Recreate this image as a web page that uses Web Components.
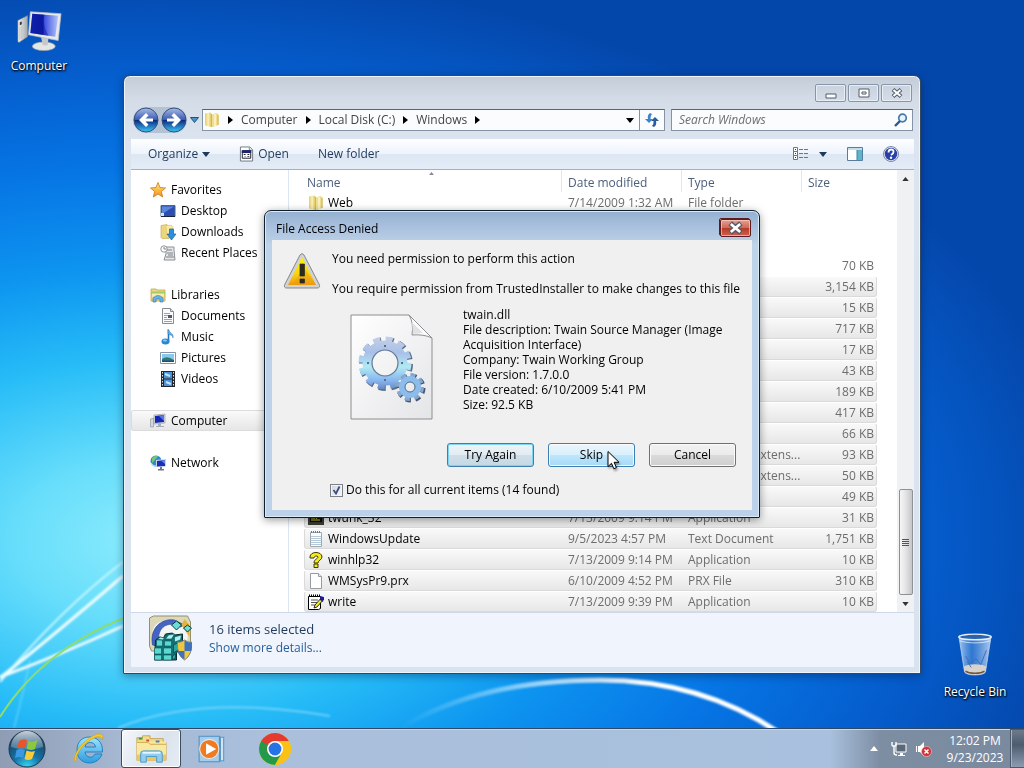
<!DOCTYPE html>
<html lang="en">
<head>
<meta charset="utf-8">
<meta name="viewport" content="width=device-width, initial-scale=1">
<title>Desktop</title>
<style>
  html, body {
    margin: 0;
    height: 100%;
    overflow: hidden;
  }
  body {
    font: 12px/16px "Open Sans", "Noto Sans", sans-serif;
    color: #000;
  }
  /* Everything that floats on the desktop's free canvas. */
  desktop-icon, explorer-window, access-dialog, mouse-pointer {
    position: absolute;
  }
  #computer { left: 2px; top: 8px; }
  #recycle { right: 12px; top: 632px; }
  explorer-window { left: 123px; right: 103px; top: 75px; }
  access-dialog { left: 264px; top: 210px; }
  mouse-pointer { left: 607px; top: 450px; }
</style>
</head>
<body>
<win-desktop>
  <desktop-icon id="computer" icon="computer-big">Computer</desktop-icon>
  <desktop-icon id="recycle" icon="bin">Recycle Bin</desktop-icon>

  <explorer-window>
    <address-bar slot="address">
      <address-crumb>Computer</address-crumb>
      <address-crumb>Local Disk (C:)</address-crumb>
      <address-crumb>Windows</address-crumb>
    </address-bar>
    <search-box slot="search" placeholder="Search Windows"></search-box>

    <tool-button slot="tools" menu>Organize</tool-button>
    <tool-button slot="tools" icon="exe">Open</tool-button>
    <tool-button slot="tools">New folder</tool-button>

    <nav-group slot="nav">
      <nav-item icon="star">Favorites</nav-item>
      <nav-item icon="desktop" child>Desktop</nav-item>
      <nav-item icon="downloads" child>Downloads</nav-item>
      <nav-item icon="recent" child>Recent Places</nav-item>
    </nav-group>
    <nav-group slot="nav">
      <nav-item icon="libraries">Libraries</nav-item>
      <nav-item icon="documents" child>Documents</nav-item>
      <nav-item icon="music" child>Music</nav-item>
      <nav-item icon="pictures" child>Pictures</nav-item>
      <nav-item icon="videos" child>Videos</nav-item>
    </nav-group>
    <nav-group slot="nav">
      <nav-item icon="computer" selected>Computer</nav-item>
    </nav-group>
    <nav-group slot="nav">
      <nav-item icon="network">Network</nav-item>
    </nav-group>

    <file-list slot="files"></file-list>

    <span slot="summary">16 items selected</span>
    <a slot="more" href="#details">Show more details...</a>
  </explorer-window>

  <access-dialog heading="File Access Denied">
    <p slot="message">You need permission to perform this action</p>
    <p slot="message">You require permission from TrustedInstaller to make changes to this file</p>
    <div slot="details">twain.dll</div>
    <div slot="details">File description: Twain Source Manager (Image Acquisition Interface)</div>
    <div slot="details">Company: Twain Working Group</div>
    <div slot="details">File version: 1.7.0.0</div>
    <div slot="details">Date created: 6/10/2009 5:41 PM</div>
    <div slot="details">Size: 92.5 KB</div>
    <push-button slot="actions" kind="default">Try Again</push-button>
    <push-button slot="actions" kind="hot">Skip</push-button>
    <push-button slot="actions">Cancel</push-button>
    <check-option slot="option">Do this for all current items (14 found)</check-option>
  </access-dialog>

  <task-bar slot="taskbar">
    <task-button icon="ie" label="Internet Explorer"></task-button>
    <task-button icon="explorer" label="Windows Explorer" active></task-button>
    <task-button icon="player" label="Media Player"></task-button>
    <task-button icon="chrome" label="Chrome"></task-button>
    <time slot="clock">12:02 PM</time>
    <time slot="clock">9/23/2023</time>
  </task-bar>

  <mouse-pointer></mouse-pointer>
</win-desktop>

<script>
(function() {
  /**
   * Icon drawings, as [viewBox, markup]. Gradient ids are local to the
   * shadow root that the icon is drawn in.
   */
  const ICONS = {
    'computer-big': ['0 0 48 44', `
      <defs>
        <linearGradient id="s" x1="0" x2="1"><stop offset="0" stop-color="#1428c0"/><stop offset=".45" stop-color="#0a1ab0"/><stop offset=".5" stop-color="#3c50e0"/><stop offset="1" stop-color="#b4c4fa"/></linearGradient>
        <linearGradient id="t" x1="0" x2="1"><stop offset="0" stop-color="#f2f2ee"/><stop offset="1" stop-color="#a4a8ac"/></linearGradient>
      </defs>
      <path d="M2 12l10-5v22L3 35l-1-1z" fill="url(#t)" stroke="#8c9298" stroke-width=".6"/>
      <path d="M4 14l2-1v3l-2 1z" fill="#333"/><path d="M4 19v13M6 18v13" stroke="#b8bcc0" stroke-width=".7"/>
      <ellipse cx="29" cy="39" rx="12" ry="4.500" fill="#e4e6e4" stroke="#a0a4a4" stroke-width=".7"/>
      <path d="M26 29h8l-1 9h-5z" fill="#c4c8cc"/>
      <path d="M15 3l32 2-3 28-31-6z" fill="#e6e8ea" stroke="#b8bec6" stroke-width=".8"/>
      <path d="M17 5l27 2-3 22-26-4z" fill="url(#s)"/>
      <path d="M17 5l13 1c-2 8 0 15 4 22l-19-3z" fill="#0c1690" opacity=".45"/>`],
    bin: ['0 0 40 46', `
      <defs><linearGradient id="g" x1="0" x2="1"><stop offset="0" stop-color="#cfe4fa" stop-opacity=".8"/><stop offset=".4" stop-color="#5a9ae4" stop-opacity=".5"/><stop offset="1" stop-color="#dceafa" stop-opacity=".8"/></linearGradient></defs>
      <path d="M3 3l6 38c2 4 20 4 22 0l6-38z" fill="url(#g)" stroke="#bcd4f0" stroke-width=".8"/>
      <path d="M8 35c6-3 18-3 24 0l-1 6c-3 4-19 4-22 0z" fill="#d8d2cc"/>
      <path d="M10 24l5 8 6-5 5 6 6-15M12 30l4 6" fill="none" stroke="#3f6cae" stroke-width="1"/>
      <path d="M10 40c4 3 16 3 20 0" fill="none" stroke="#72563e" stroke-width="1.500"/>
      <ellipse cx="20" cy="4" rx="17" ry="3" fill="#2a63ae" stroke="#e6eef6" stroke-width="1.500"/>
      <path d="M4 8c8 3 24 3 32 0" fill="none" stroke="#fff" opacity=".7"/>`],
    folder: ['0 0 16 16', `
      <defs><linearGradient id="f" x1="0" x2="1"><stop offset="0" stop-color="#e4cc6c"/><stop offset=".5" stop-color="#faf0b4"/><stop offset="1" stop-color="#dcbe54"/></linearGradient></defs>
      <path d="M1 1.500l5-1 1.500 1V15l-5.500-1-1-1z" fill="url(#f)"/>
      <path d="M7 3l5-2 2.500 1v11L9 15l-2-1z" fill="#f0de90"/>
      <path d="M7.500 2v13" stroke="#c4a848" stroke-width=".7"/><path d="M11 2v12" stroke="#fcf6d0" stroke-width="1.500"/><path d="M14 3v10" stroke="#c4a030" stroke-width=".8"/>`],
    star: ['0 0 16 16', `
      <defs><linearGradient id="y" x1="0" x2="0" y1="0" y2="1"><stop offset="0" stop-color="#fff07a"/><stop offset="1" stop-color="#f08c1c"/></linearGradient></defs>
      <path d="M8 .5l2 5 5.500.5-4.200 3.500 1.400 5.500L8 12l-4.700 3 1.400-5.500L.5 6l5.500-.5z" fill="url(#y)" stroke="#d67f26" stroke-width=".9"/>`],
    desktop: ['0 0 16 16', `
      <path d="M1 2.500h14v11H1z" fill="#2a4fb0" stroke="#4c6488"/><path d="M2 3.500h12L2 11z" fill="#5a86dc"/>
      <path d="M1 13h14v1H1z" fill="#18243c"/><path d="M1 10h3v3H1z" fill="#cfe6fa"/>`],
    downloads: ['0 0 16 16', `
      <path d="M1 1.500l6-1 2 2v12H2l-1-1z" fill="#ecd67c" stroke="#c4a648" stroke-width=".6"/><path d="M6 1.500h6l1 1v11H7z" fill="#f6e9a4" stroke="#d8be68" stroke-width=".5"/>
      <path d="M9.500 5h4v5H16l-4.500 6L7 10h2.500z" fill="#2f8edc" stroke="#1a62a8" stroke-width=".7"/>`],
    recent: ['0 0 16 16', `
      <path d="M6 2h8v3l1 10H4l2-6z" fill="#e6e8ea" stroke="#8c9094"/><circle cx="4" cy="4" r="3.200" fill="#fff" stroke="#90969c"/>
      <path d="M4 2v2h2M7 5h5M7 8h6M8 10h5M6 12h8" fill="none" stroke="#7c8288"/>`],
    libraries: ['0 0 16 16', `
      <path d="M1 2h5l1 1h8v11H1z" fill="#eed884" stroke="#c4a448" stroke-width=".8"/><path d="M1 4.500h14v3H1z" fill="#9cd060"/><path d="M2 6.500h12v3H2z" fill="#f6ecb4"/>
      <path d="M3 15v-4q5-5 10 0v4h-3v-3H6v3z" fill="#68b4e4" stroke="#3f7ebc" stroke-width=".7"/>`],
    documents: ['0 0 16 16', `
      <path d="M2.500.5h8l3 3v12h-11z" fill="#fbfbfb" stroke="#868c94"/><path d="M10.500.5v3h3" fill="#dcdfe2" stroke="#868c94"/>
      <path d="M4 5.500h6M4 7.500h4M4 9.500h3M4 11.500h8M4 13.500h8" stroke="#9aa2ac"/><path d="M8 7h4v3H8z" fill="#4b5a70"/>`],
    music: ['0 0 16 16', `
      <path d="M8.500 1v11.500" stroke="#2872bc" stroke-width="1.600"/><path d="M8 0c1 4 6 4 5 9 0-3-3-3-5-4z" fill="#5eb0ec" stroke="#2c78b8" stroke-width=".5"/>
      <ellipse cx="5.500" cy="12.500" rx="4" ry="2.900" fill="#2b86d2"/><ellipse cx="5" cy="11.500" rx="2" ry="1.100" fill="#8accf4"/>`],
    pictures: ['0 0 16 16', `
      <path d="M.5 2.500h15v11H.5z" fill="#fff" stroke="#8494a6"/><path d="M2 4h12v8H2z" fill="#8cc8ee"/><path d="M2 9q5-4 12 1v2H2z" fill="#2f7a70"/><path d="M2 10.500h12V12H2z" fill="#1e4c84"/>`],
    videos: ['0 0 16 16', `
      <path d="M1 0h14v16H1z" fill="#22262c"/><path d="M4 1h8v6.500H4zM4 8.500h8V15H4z" fill="#4a92d6"/><path d="M5 3l5 2M6 11l5 2" stroke="#c8e2f8" stroke-width="2"/>
      <path d="M2.500 1v14M13.500 1v14" stroke="#dfe4ea" stroke-dasharray="1.500 1.500"/>`],
    computer: ['0 0 16 16', `
      <path d="M.5 6l3-1v9h-3z" fill="#d4d8dc" stroke="#878e96" stroke-width=".6"/><path d="M4 2l11-1v9L4 11z" fill="#d8dce2" stroke="#8a93a0" stroke-width=".6"/>
      <path d="M5 3l9-1v7l-9 1z" fill="#1428b4"/><path d="M9 3l5-1v6z" fill="#5a74e4"/><path d="M8 11h3v2h3v1H6v-1h2z" fill="#a8aeb8"/>`],
    network: ['0 0 16 16', `
      <circle cx="6" cy="6" r="5.500" fill="#2d8cd0"/><path d="M2 3q3-3 6-2l-3 4-3 3z" fill="#74c870"/><path d="M1 8q3 4 6 3" stroke="#b8e4fa" fill="none"/>
      <path d="M6 5l10-1v7.500L6 12z" fill="#ccd4e0"/><path d="M7 6l8-1v6l-8 .5z" fill="#1830b8"/><path d="M11 5.500l4-.5v4z" fill="#6684ec"/><path d="M10 12h2v2h2v1.500H8V14h2z" fill="#68788e"/>`],
    exe: ['0 0 16 16', `
      <path d="M1.500.5h10l3 3v12h-13z" fill="#fff" stroke="#6c747c"/><path d="M11 1v3h3" fill="none" stroke="#5c9c3c"/>
      <path d="M3.500 4.500h9v8h-9z" fill="#fff" stroke="#141828"/><path d="M3 4h10v3H3z" fill="#1c2470"/><path d="M5 8h2v1H5zM9 8h2v1H9zM6 10h1v1H6zM9 10h2v1H9z" fill="#222"/>`],
    dosapp: ['0 0 16 16', `
      <path d="M0 1h16v14H0z" fill="#383c34"/><path d="M2 3h12v9H2z" fill="#0c0c08"/><path d="M3 5h3v1H3zM8 5l3 3M11 5L8 9M3 8h4M3 10h9" stroke="#dccc34" fill="none"/>`],
    text: ['0 0 16 16', `
      <path d="M2.500 1.500h11v14h-11z" fill="#fdfdfd" stroke="#a0a8b0"/><path d="M3 5.500h10M3 7.500h10M3 9.500h10M3 11.500h10M3 13.500h10" stroke="#b4cad8"/><path d="M3 1h10" stroke="#707a84" stroke-width="2" stroke-dasharray="1 1"/>`],
    help: ['0 0 16 16', `
      <path d="M2 5c0-6 12-6 12 0 0 3-4 3-4 6H6c0-4 4-4 4-6 0-1.500-4-1.500-4 1H2zM6 12h4v3.500H6z" fill="#f6ee1c" stroke="#3c3808" stroke-width="1"/>`],
    blank: ['0 0 16 16', `<path d="M2.500.5h8l3 3v12h-11z" fill="#fff" stroke="#949ba2"/><path d="M10.500.5v3h3" fill="#eee" stroke="#949ba2"/>`],
    write: ['0 0 16 16', `
      <path d="M.5 2.500h12v12l-2 1H.5z" fill="#fff" stroke="#000"/><path d="M1 1.500h12" stroke="#000" stroke-width="2" stroke-dasharray="1 1"/>
      <path d="M3 6h7M3 8.500h6M3 11h5" stroke="#555"/><path d="M14 3l2 2-7 8-3 1 1-3z" fill="#f4e830" stroke="#000" stroke-width=".8"/><path d="M12 2l4 1-1 5-3-2z" fill="#1c1c90"/>`],
    registry: ['0 0 44 46', `
      <path d="M1 3l4-2h34l3 6v26l-6 3H3l-2-5z" fill="#dcd8b8" stroke="#94906c"/>
      <path d="M4 16C6 6 18 3 28 6l12 8-2 20H8z" fill="#f2f4f6"/>
      <path d="M4 30C1 14 12 3 26 5l10 5-4 2c-10-6-22-2-22 12l2 8z" fill="#4664c4" stroke="#28428c" stroke-width=".6"/>
      <path d="M36 4l5 6v12l-8-12z" fill="#e2b43c"/>
      <path d="M23 10l5-4 5 4-5 5zM35 13l4-3 4 3-4 4z" fill="#6cdcd4" stroke="#0c3c40"/>
      <path d="M7 25l4-3 4 1 2-4 7-1 2 2 8-1v12l-6 7v7H6z" fill="#137074" stroke="#062c30"/>
      <path d="M6 33h7v6H6zM15 33h8v6h-8zM6 40h7v5H6zM15 40h8v5h-8zM8 25h6v6H8zM16 26h7v5h-7z" fill="#5cd8d2" stroke="#0a5054" stroke-width=".6"/>
      <path d="M9 24l3-2 4 1-2 2zM17 24l3-4 6-1-3 5zM26 22l7-2-1 5-6 2z" fill="#a8f4f0" stroke="#0a5054" stroke-width=".6"/>
      <path d="M25 30l6-3v7l-6 4zM24 41l3-2v4l-3 2z" fill="#2ca4a0" stroke="#08343a" stroke-width=".6"/>
      <path d="M36 25q4 3 7 2 1 13-7 18-8-5-7-18 3 1 7-2z" fill="#f0c83c" stroke="#82858a"/>
      <path d="M36 25.500V36h7q.6-4 .3-8.500-4 .5-7.300-2zM36 36h-7q2 6 7 8.500z" fill="#3f72bc"/>`],
    warning: ['0 0 38 38', `
      <defs><linearGradient id="w" x1="0" x2="0" y1="0" y2="1"><stop offset="0" stop-color="#fff200"/><stop offset=".6" stop-color="#f8d414"/><stop offset="1" stop-color="#f09a10"/></linearGradient></defs>
      <path d="M17 3q2-3 4 0l15 29q2 4-2 4H4q-4 0-2-4z" fill="#d0d2d4" stroke="#84888c"/>
      <path d="M19 5l14 28H5z" fill="url(#w)"/><path d="M19 13L33 33H5q10-2 14-20z" fill="#e89c10" opacity=".45"/>
      <path d="M17 12h4.500v12H17zM17 27h4.500v4H17z" fill="#2c2a1c" stroke="#2c2a1c" stroke-width=".7" stroke-linejoin="round"/>`],
    dll: ['0 0 84 107', `
      <defs>
        <linearGradient id="p" x1="0" x2="1" y1="0" y2="1"><stop offset="0" stop-color="#fff"/><stop offset="1" stop-color="#e4e5e7"/></linearGradient>
        <linearGradient id="m" gradientUnits="userSpaceOnUse" x1="0" x2="0" y1="22" y2="78"><stop offset="0" stop-color="#c6d0e6"/><stop offset=".3" stop-color="#a8c0e8"/><stop offset=".55" stop-color="#b0eaf4"/><stop offset=".8" stop-color="#86b4ee"/><stop offset="1" stop-color="#5c7cb4"/></linearGradient>
      </defs>
      <path d="M1 1h58l23 23v81H1z" fill="url(#p)" stroke="#8c8e90"/>
      <path d="M59 1q5 8 3 20 12-1 20 3z" fill="#fcfcfc" stroke="#8c8e90"/><path d="M63 20L62 8l11 11z" fill="#dfe1e3"/>
      <g fill="none">
        <circle cx="36" cy="50" r="24" stroke="#5c6c88" stroke-width="6" stroke-dasharray="7 5.566"/>
        <circle cx="35" cy="49" r="24" stroke="url(#m)" stroke-width="5" stroke-dasharray="7 5.566"/>
        <circle cx="35" cy="49" r="17.500" stroke="url(#m)" stroke-width="10"/>
        <circle cx="35" cy="49" r="13" stroke="#6b7a92" stroke-width="1.200"/>
        <circle cx="61" cy="74" r="12" stroke="#44566e" stroke-width="5" stroke-dasharray="5 4.425"/>
        <circle cx="60" cy="73" r="12" stroke="#86a8cc" stroke-width="4" stroke-dasharray="5 4.425"/>
        <circle cx="60" cy="73" r="8" stroke="#8cbcec" stroke-width="6"/>
        <circle cx="60" cy="73" r="5" stroke="#51698a"/>
      </g>
      <path d="M34 31h2v2h-2zM34 65h2v2h-2zM17 48h2v2h-2zM51 48h2v2h-2z" fill="#5a6c94"/>`],
    orb: ['0 0 38 38', `
      <defs>
        <radialGradient id="o" cx=".5" cy="1" r=".95"><stop offset="0" stop-color="#38d8f4"/><stop offset=".4" stop-color="#1574a8"/><stop offset="1" stop-color="#183854"/></radialGradient>
        <linearGradient id="h" x1="0" x2="0" y1="0" y2="1"><stop offset="0" stop-color="#f4f8fc" stop-opacity=".8"/><stop offset="1" stop-color="#b4c8dc" stop-opacity=".3"/></linearGradient>
      </defs>
      <circle cx="19" cy="19" r="18" fill="url(#o)" stroke="#20384e"/>
      <path d="M3 17a16 16 0 0 1 32 0q-16 5-32 0z" fill="url(#h)"/>
      <path d="M11 11q4-3 8-1l-1.500 8q-4-2-8.500 0z" fill="#e8552c"/><path d="M20.500 11q4 2 9-1L27 19q-5 2-8.500-.5z" fill="#8cc83c"/>
      <path d="M8.500 20q4-2 8.500 0l-2 8q-3-2-8 0z" fill="#3c98e0"/><path d="M18.500 20.500q4 2 8.500.5l-3 8q-4 2-7.500 0z" fill="#f8cc38"/>`],
    ie: ['0 0 32 32', `
      <defs><linearGradient id="e" x1="0" x2="0" y1="0" y2="1"><stop offset="0" stop-color="#a0e4fc"/><stop offset="1" stop-color="#2c9ce0"/></linearGradient></defs>
      <path d="M16.500 4C24 4 30 9 29.500 19H12c.5 6 8 7 10 2h7c-2 6-7 9-12.500 9C9 30 4 25 4 17S9 4 16.500 4zM12 14h10.500c-.5-6-10-6-10.500 0z" fill="url(#e)" stroke="#1c7cbc" stroke-width=".9"/>
      <path d="M2 29C-2 22 14 2 26 1c5 0 4 4 3 6 0-4-4-4-8-2C12 9 3 19 3 28z" fill="#f4cc28" stroke="#c8981c" stroke-width=".5"/>`],
    explorer: ['0 0 34 32', `
      <path d="M2 4h6v-2h8v3h14v4h3v19H2z" fill="#f2dc8c" stroke="#c8a250"/>
      <path d="M2 8h31v20H2z" fill="#f8e8a0"/><path d="M4 4h4v2H4z" fill="#3c9c3c"/><path d="M12 6h3v2h-3z" fill="#d0482c"/><path d="M22 7h4v2h-4z" fill="#3c78cc"/>
      <path d="M2 9h12l2 2h17" fill="none" stroke="#cca850"/><path d="M2 22h31v6H2z" fill="#e8c860"/>
      <path d="M6 30v-9q0-3 3-3h17q3 0 3 3v9h-6v-6H12v6z" fill="#90cdf0" stroke="#4c98cc"/><path d="M8 20h19" stroke="#e4f6ff" stroke-width="2"/>`],
    player: ['0 0 30 28', `
      <path d="M9 3h16v22H9z" fill="#cfe4f4" stroke="#5c98c8"/><path d="M6 3h16v22H6z" fill="#b8d8f0" stroke="#5c98c8"/><path d="M2 2h19v24H2z" fill="#a4ccec" stroke="#5090c4"/>
      <circle cx="11.500" cy="14" r="9" fill="#f07a20" stroke="#e4e4e4"/><path d="M8.500 8.500L18 14l-9.500 5.500z" fill="#fff"/>`],
    chrome: ['0 0 32 32', `
      <circle cx="16" cy="16" r="16" fill="#fbc116"/>
      <path d="M16 16L2.150 8A16 16 0 0 1 29.850 8H16z" fill="#e33b2e"/><path d="M16 16L2.150 8A16 16 0 0 0 16 32l6.900-12z" fill="#229a49"/>
      <path d="M16 8h13.850A16 16 0 0 1 16 32l6.900-12z" fill="#fbc116"/><path d="M2.150 8L9 20l7-12z" fill="#e33b2e"/><path d="M2.150 8l7 12 3-6z" fill="#229a49"/>
      <circle cx="16" cy="16" r="8" fill="#fff"/><circle cx="16" cy="16" r="6.400" fill="#2673e8"/>`],
    back: ['0 0 26 26', `
      <defs><linearGradient id="b" x1="0" x2="0" y1="0" y2="1"><stop offset="0" stop-color="#a8bce8"/><stop offset=".48" stop-color="#3c5cb0"/><stop offset=".52" stop-color="#0c2c84"/><stop offset="1" stop-color="#3cc8f8"/></linearGradient></defs>
      <circle cx="13" cy="13" r="12" fill="url(#b)" stroke="#35517c"/><path d="M6 13l7-7 2.500 2.500L12.500 11.500H20v3h-7.500l3 3L13 20z" fill="#fff"/>`],
    forward: ['0 0 26 26', `
      <defs><linearGradient id="b" x1="0" x2="0" y1="0" y2="1"><stop offset="0" stop-color="#a8bce8"/><stop offset=".48" stop-color="#3c5cb0"/><stop offset=".52" stop-color="#0c2c84"/><stop offset="1" stop-color="#3cc8f8"/></linearGradient></defs>
      <circle cx="13" cy="13" r="12" fill="url(#b)" stroke="#35517c"/><path d="M20 13l-7-7-2.500 2.500 3 3H6v3h7.500l-3 3L13 20z" fill="#fff"/>`],
    recentpages: ['0 0 9 6', `<path d="M.5.5h8L4.500 5.500z" fill="#4c94c8" stroke="#24507c"/>`],
    arrow: ['0 0 5 8', `<path d="M0 0l5 4-5 4z" fill="#000"/>`],
    down: ['0 0 8 5', `<path d="M0 0h8L4 5z" fill="currentColor"/>`],
    up: ['0 0 8 5', `<path d="M0 5h8L4 0z" fill="currentColor"/>`],
    refresh: ['0 0 16 16', `
      <path d="M6 1q-3 2-2 6H1l4 4 4-4H6.500Q6 4 8 2z" fill="#3c84cc"/><path d="M10 15q3-2 2-6h3l-4-4-4 4h2.500q.5 3-1.500 5z" fill="#285c9c"/>`],
    search: ['0 0 14 14', `<circle cx="8.500" cy="5" r="3.800" fill="#e8f4fc" stroke="#4878ac" stroke-width="1.700"/><path d="M6 8l-5 5" stroke="#2f5888" stroke-width="2.400"/>`],
    view: ['0 0 16 14', `
      <path d="M.5.500h4v4h-4zM.5 4.500h4v4h-4zM.5 8.500h4v4h-4z" fill="#fff" stroke="#68788c"/><path d="M2 2h1v1H2zM2 6h1v1H2zM2 10h1v1H2z" fill="#334"/>
      <path d="M6 2.500h9M6 6.500h9M6 10.500h9" stroke="#68788c" stroke-dasharray="4 1"/>`],
    pane: ['0 0 16 14', `<path d="M.5.500h15v13H.5z" fill="#fff" stroke="#587ca0"/><path d="M1 1h14v2H1z" fill="#c8dcec"/><path d="M10 3h5v10h-5z" fill="#58b8c8"/><path d="M10 3v10" stroke="#4c7ca8"/>`],
    about: ['0 0 16 16', `
      <circle cx="8" cy="8" r="7.500" fill="#e4e8f4" stroke="#7c88a4"/><circle cx="8" cy="8" r="6.200" fill="#2840a8"/>
      <path d="M5.500 6.500q0-3 2.600-3T10.500 6Q10.500 7.500 8 9" fill="none" stroke="#fff" stroke-width="1.800"/><circle cx="8" cy="11.800" r="1.200" fill="#fff"/>`],
    minimize: ['0 0 12 12', `<path d="M1 7h10v4H1z" fill="#fff" stroke="#525c6c"/>`],
    maximize: ['0 0 12 12', `<path d="M1 2h10v8H1z" fill="#fff" stroke="#525c6c"/><path d="M4 5h4v2H4z" fill="#fff" stroke="#525c6c"/>`],
    close: ['0 0 12 12', `<path d="M2 2.500l8 7M10 2.500l-8 7" stroke="#525c6c" stroke-width="4"/><path d="M2.500 3l7 6M9.500 3l-7 6" stroke="#fff" stroke-width="2"/>`],
    lan: ['0 0 16 16', `
      <path d="M5 3h10v8H5z" fill="#5a6878" stroke="#fff"/><path d="M9 12h3v2h2v1H7v-1h2z" fill="#fff"/>
      <path d="M1 1v3q0 1 1 1h2q1 0 1-1V1M3 5v7q0 2 3 2" fill="none" stroke="#fff" stroke-width="1.400"/>`],
    muted: ['0 0 17 16', `
      <path d="M1 5h1v6H1zM3 5h2l4-4v14l-4-4H3z" fill="#fff"/><circle cx="11.500" cy="10.500" r="5" fill="#d4303a" stroke="#f4c8c8" stroke-width=".6"/><path d="M9.500 8.500l4 4M13.500 8.500l-4 4" stroke="#fff" stroke-width="1.500"/>`],
  };

  const icon = (name, width, height = width) =>
    `<svg class="icon ${name}" width="${width}" height="${height}" viewBox="${ICONS[name][0]}" aria-hidden="true">${ICONS[name][1]}</svg>`;

  /**
   * Shared by every element: an open shadow root filled from a template, plus
   * the few rules that all of them need.
   */
  class BaseElement extends HTMLElement {
    constructor() {
      super();
      this.attachShadow({mode: 'open'});
    }

    connectedCallback() {
      const template = document.createElement('template');
      template.innerHTML = `
        <style>
          :host { box-sizing: border-box; }
          *, *::before, *::after { box-sizing: border-box; }
          svg { display: block; flex: none; }
          button, input { font: inherit; color: inherit; margin: 0; }
          button { padding: 0; border: 0; background: none; }
        </style>
        ${this.render()}
      `;
      this.shadowRoot.replaceChildren(template.content.cloneNode(true));
    }
  }

  class WinDesktop extends BaseElement {
    render() {
      return `
        <style>
          :host {
            display: flex;
            flex-direction: column;
            position: relative;
            height: 100%;
            overflow: hidden;
          }
          .wallpaper { position: absolute; inset: 0; width: 100%; height: 100%; }
          .space { flex: 1; }
        </style>
        <svg class="wallpaper" viewBox="0 0 1024 768" preserveAspectRatio="none" aria-hidden="true">
          <defs>
            <radialGradient id="glow" gradientUnits="userSpaceOnUse" cx="0" cy="0" r="1" gradientTransform="translate(150 540) scale(940 570)">
              <stop offset="0" stop-color="#8cecfd"/>
              <stop offset=".14" stop-color="#68defb"/>
              <stop offset=".32" stop-color="#26bcf7"/>
              <stop offset=".48" stop-color="#0d94f0"/>
              <stop offset=".66" stop-color="#0674e4"/>
              <stop offset=".84" stop-color="#055bca"/>
              <stop offset="1" stop-color="#0447ab"/>
            </radialGradient>
            <filter id="soft"><feGaussianBlur stdDeviation="1"/></filter>
            <linearGradient id="arc" gradientUnits="userSpaceOnUse" x1="400" x2="640" y1="0" y2="0"><stop offset="0" stop-color="#bfeaff" stop-opacity="0"/><stop offset=".6" stop-color="#e4f6ff" stop-opacity=".7"/><stop offset="1" stop-color="#fff"/></linearGradient>
          </defs>
          <path d="M0 0h1024v768H0z" fill="url(#glow)"/>
          <g fill="none" filter="url(#soft)">
            <path d="M14 728Q24 690 30 660" stroke="#8ce4fc" stroke-width="2" opacity=".4"/>
            <path d="M0 682Q60 610 123 562" stroke="#c8f6ff" stroke-width="2"/>
            <path d="M0 678Q60 630 123 576" stroke="#f0fdff" stroke-width="3"/>
            <path d="M0 677Q60 655 123 626" stroke="#f0fdff" stroke-width="3"/>
            <path d="M118 728Q200 694 330 716" stroke="#8cdcfc" stroke-width="2" opacity=".7"/>
            <path d="M400 728Q480 680 600 680 700 680 778 732" stroke="url(#arc)" stroke-width="5"/>
          </g>
          <path d="M0 717Q45 645 140 612" fill="none" stroke="#8cdc70" stroke-width="2"/>
        </svg>
        <div class="space"><slot></slot></div>
        <slot name="taskbar"></slot>
      `;
    }
  }

  class DesktopIcon extends BaseElement {
    render() {
      const big = this.getAttribute('icon') === 'bin' ? [38, 46] : [46, 44];
      return `
        <style>
          :host {
            display: flex;
            flex-direction: column;
            align-items: center;
            gap: 6px;
            min-width: 74px;
            color: #fff;
            text-shadow: 0 1px 2px #000, 1px 1px 2px #000;
          }
        </style>
        ${icon(this.getAttribute('icon'), ...big)}
        <span><slot></slot></span>
      `;
    }
  }

  class ExplorerWindow extends BaseElement {
    render() {
      return `
        <style>
          :host {
            display: block;
            padding: 8px 6px 6px 7px;
            border: 1px solid #33485e;
            border-radius: 7px 7px 1px 1px;
            background: linear-gradient(#c3ccd7, #d3dce7 24px, #dbe4ef 64px, #d9e3ef);
            box-shadow: inset 0 0 0 1px #eef4fa, 0 2px 8px rgba(0, 20, 60, .4);
            color: #1e395b;
          }
          .caption { display: flex; justify-content: flex-end; gap: 2px; padding-right: 2px; }
          .caption button {
            display: grid;
            place-items: center;
            width: 31px;
            height: 18px;
            border: 1px solid #8695a8;
            border-radius: 2px;
            box-shadow: inset 0 0 0 1px #e8eef6;
          }
          .address { display: flex; align-items: center; gap: 3px; padding: 5px 1px 6px 2px; }
          .address slot { display: contents; }
          .orbs { display: flex; gap: 2px; border-radius: 13px; background: #b4c2d4; }
          .toolbar {
            display: flex;
            align-items: center;
            gap: 29px;
            height: 31px;
            padding: 0 15px 0 17px;
            border-bottom: 1px solid #a2b1c6;
            background: linear-gradient(#fdfeff, #eef4fc 48%, #dde7f3 52%, #e3ecf7);
          }
          .views { display: flex; align-items: center; gap: 20px; margin-left: auto; }
          .view-menu { display: flex; align-items: center; gap: 10px; }
          .body { display: flex; background: #fff; }
          nav { flex: none; width: 158px; padding-top: 9px; border-right: 1px solid #dce6f2; }
          ::slotted(file-list) { flex: 1; }
          .scrollbar { display: flex; flex-direction: column; align-items: center; width: 17px; background: #f0f1f2; color: #333; }
          .scrollbar button { display: grid; place-items: center; width: 16px; height: 17px; }
          .track { display: flex; flex: 1; align-items: flex-end; }
          .thumb {
            display: flex;
            flex-direction: column;
            align-items: center;
            justify-content: center;
            gap: 1px;
            width: 14px;
            height: 106px;
            border: 1px solid #8e9194;
            border-radius: 2px;
            background: linear-gradient(90deg, #f6f6f6, #e4e5e6 45%, #c4c6c9);
          }
          .thumb i { width: 7px; height: 1px; background: #555; }
          .details {
            display: flex;
            align-items: center;
            gap: 16px;
            height: 55px;
            padding: 0 17px 4px;
            border-top: 1px solid #cfd8e6;
            background: #f0f4fc;
          }
          .summary { display: flex; flex-direction: column; line-height: 18px; }
          .summary slot { display: block; }
          ::slotted([slot="summary"]) { font-size: 13px; }
          ::slotted([slot="more"]) { color: #26609c; text-decoration: none; }
        </style>
        <div class="caption">
          <button aria-label="Minimize">${icon('minimize', 12)}</button>
          <button aria-label="Maximize">${icon('maximize', 12)}</button>
          <button aria-label="Close">${icon('close', 12)}</button>
        </div>
        <div class="address">
          <div class="orbs">
            <button aria-label="Back">${icon('back', 26)}</button>
            <button aria-label="Forward">${icon('forward', 26)}</button>
          </div>
          <button aria-label="Recent pages">${icon('recentpages', 9, 6)}</button>
          <slot name="address"></slot>
          <slot name="search"></slot>
        </div>
        <div class="toolbar">
          <slot name="tools"></slot>
          <div class="views">
            <div class="view-menu">
              <button aria-label="Change view">${icon('view', 16, 14)}</button>
              <button aria-label="More views">${icon('down', 8, 5)}</button>
            </div>
            <button aria-label="Preview pane">${icon('pane', 16, 14)}</button>
            <button aria-label="Help">${icon('about', 16)}</button>
          </div>
        </div>
        <div class="body">
          <nav><slot name="nav"></slot></nav>
          <slot name="files"></slot>
          <div class="scrollbar">
            <button aria-label="Scroll up">${icon('up', 7, 4)}</button>
            <div class="track"><div class="thumb"><i></i><i></i><i></i><i></i></div></div>
            <button aria-label="Scroll down">${icon('down', 7, 4)}</button>
          </div>
        </div>
        <div class="details">
          ${icon('registry', 45, 46)}
          <div class="summary">
            <slot name="summary"></slot>
            <slot name="more"></slot>
          </div>
        </div>
      `;
    }
  }

  class AddressBar extends BaseElement {
    render() {
      return `
        <style>
          :host {
            display: flex;
            flex: 1;
            align-items: center;
            height: 22px;
            margin-right: 3px;
            padding-left: 1px;
            border: 1px solid #8593a6;
            border-top-color: #566474;
            background: #fafcfe;
            color: #444;
          }
          .folder { margin-right: 8px; }
          .trail { display: flex; flex: 1; align-items: center; }
          button { display: grid; place-items: center; height: 20px; }
          .drop { width: 19px; color: #000; }
          .go { width: 25px; border-left: 1px solid #8593a6; }
        </style>
        ${icon('folder', 16)}
        <div class="trail">${icon('arrow', 5, 8)}<slot></slot></div>
        <button class="drop" aria-label="Previous locations">${icon('down', 8, 5)}</button>
        <button class="go" aria-label="Refresh">${icon('refresh', 16)}</button>
      `;
    }
  }

  class AddressCrumb extends BaseElement {
    render() {
      return `
        <style>
          :host { display: flex; align-items: center; }
          button { padding: 0 8px; }
        </style>
        <button><slot></slot></button>${icon('arrow', 5, 8)}
      `;
    }
  }

  class SearchBox extends BaseElement {
    render() {
      const text = this.getAttribute('placeholder');
      return `
        <style>
          :host {
            display: flex;
            flex: none;
            align-items: center;
            width: 242px;
            height: 22px;
            padding: 0 4px 0 7px;
            border: 1px solid #8593a6;
            border-top-color: #566474;
            background: #fafcfe;
          }
          input { flex: 1; min-width: 0; padding: 0; border: 0; background: none; outline: none; font-style: italic; }
          input::placeholder { color: #6d6d6d; opacity: 1; }
        </style>
        <input type="search" aria-label="${text}" placeholder="${text}">
        ${icon('search', 14)}
      `;
    }
  }

  class ToolButton extends BaseElement {
    render() {
      const name = this.getAttribute('icon');
      return `
        <style>
          :host { display: block; }
          button { display: flex; align-items: center; gap: 4px; }
        </style>
        <button>${name ? icon(name, 15, 16) : ''}<span><slot></slot></span>${this.hasAttribute('menu') ? icon('down', 8, 5) : ''}</button>
      `;
    }
  }

  class NavGroup extends BaseElement {
    render() {
      return `
        <style>
          :host { display: block; margin-bottom: 21px; }
        </style>
        <slot></slot>
      `;
    }
  }

  class NavItem extends BaseElement {
    render() {
      return `
        <style>
          :host { display: block; color: #000; }
          a {
            display: flex;
            align-items: center;
            gap: 5px;
            height: 21px;
            padding-left: 18px;
            border: 1px solid transparent;
            color: inherit;
            text-decoration: none;
          }
          :host([child]) a { padding-left: 28px; }
          :host([selected]) a {
            border-color: #dcdcdc;
            border-radius: 2px;
            background: linear-gradient(#fafafa, #e6e6e6);
          }
        </style>
        <a href="#">${icon(this.getAttribute('icon'), 16)}<span><slot></slot></span></a>
      `;
    }
  }

  /** Rows of the folder: [icon, name, date, type, size]. */
  const FILES = [
    ['folder', 'Web', '7/14/2009 1:32 AM', 'File folder', ''],
    ['', '', '', '', ''],
    ['', '', '', '', ''],
    ['', '', '', '', '70 KB'],
    ['', '', '', '', '3,154 KB'],
    ['', '', '', '', '15 KB'],
    ['', '', '', '', '717 KB'],
    ['', '', '', '', '17 KB'],
    ['', '', '', '', '43 KB'],
    ['', '', '', '', '189 KB'],
    ['', '', '', '', '417 KB'],
    ['', '', '', '', '66 KB'],
    ['', '', '', 'Application extens...', '93 KB'],
    ['', '', '', 'Application extens...', '50 KB'],
    ['', '', '', '', '49 KB'],
    ['dosapp', 'twunk_32', '7/13/2009 9:14 PM', 'Application', '31 KB'],
    ['text', 'WindowsUpdate', '9/5/2023 4:57 PM', 'Text Document', '1,751 KB'],
    ['help', 'winhlp32', '7/13/2009 9:14 PM', 'Application', '10 KB'],
    ['blank', 'WMSysPr9.prx', '6/10/2009 4:52 PM', 'PRX File', '310 KB'],
    ['write', 'write', '7/13/2009 9:39 PM', 'Application', '10 KB'],
  ];
  const FIRST_SELECTED = 4;

  class FileList extends BaseElement {
    render() {
      const rows = FILES.map(([pic, name, date, type, size], i) => `
        <tr class="${i >= FIRST_SELECTED ? 'selected' : ''}">
          <td><div class="name">${pic ? icon(pic, 16) : ''}<span>${name}</span></div></td>
          <td>${date}</td><td>${type}</td><td>${size}</td>
        </tr>`).join('');
      return `
        <style>
          :host { display: block; padding: 0 20px 0 15px; }
          table { width: 100%; table-layout: fixed; border-spacing: 0; color: #6d6d6d; }
          th { height: 22px; padding: 4px 0 0 6px; border-right: 1px solid #dfe7f0; font-weight: normal; text-align: left; color: #4c607a; }
          th:first-child { position: relative; padding-left: 3px; }
          th:last-child { border-right: 0; }
          th svg { position: absolute; left: 124px; top: 2px; color: #7c8c9c; }
          .col-name { width: 258px; }
          .col-date, .col-type { width: 120px; }
          td { height: 21px; padding: 0 0 0 6px; white-space: nowrap; line-height: 16px; border: 1px solid transparent; border-width: 1px 0; }
          td:first-child { border-left-width: 1px; padding-left: 3px; color: #000; }
          td:last-child { border-right-width: 1px; padding-right: 2px; text-align: right; }
          .selected td { border-color: #dadada; border-top-color: #fff; background: linear-gradient(#f9f9f9, #e7e7e7); }
          .selected td:first-child { border-radius: 3px 0 0 3px; }
          .selected td:last-child { border-radius: 0 3px 3px 0; }
          .name { display: flex; align-items: center; gap: 4px; }
        </style>
        <table>
          <colgroup><col class="col-name"><col class="col-date"><col class="col-type"><col></colgroup>
          <thead><tr><th>Name${icon('up', 7, 3)}</th><th>Date modified</th><th>Type</th><th>Size</th></tr></thead>
          <tbody>${rows}</tbody>
        </table>
      `;
    }
  }

  class AccessDialog extends BaseElement {
    render() {
      return `
        <style>
          :host {
            display: block;
            width: 496px;
            padding: 0 7px 7px;
            border: 1px solid #0c2030;
            border-radius: 7px 7px 1px 1px;
            background: linear-gradient(#94b0d0, #a9c1de 16px, #bed2e8 34px, #bdd2ea);
            box-shadow: inset 0 0 0 1px #d6ecf8, 0 2px 8px rgba(0, 0, 0, .4);
          }
          header { display: flex; align-items: center; justify-content: space-between; height: 29px; padding: 7px 2px 0 4px; }
          .close {
            display: grid;
            place-items: center;
            width: 31px;
            height: 18px;
            margin-bottom: 4px;
            border: 1px solid #5c1c20;
            border-radius: 2px;
            background: linear-gradient(#e4a090, #cf6a58 48%, #b83a28 52%, #d0604c);
            box-shadow: inset 0 0 0 1px rgba(255, 220, 210, .6);
          }
          .content {
            display: grid;
            grid-template-columns: 37px minmax(0, 1fr);
            column-gap: 12px;
            padding: 11px 16px 12px 11px;
            background: #f0f0f0;
          }
          .content .warning { margin-top: 1px; }
          ::slotted(p) { margin: 0 0 14px; white-space: nowrap; }
          .file { display: grid; grid-template-columns: 84px 262px; column-gap: 29px; margin: -4px 0 0 18px; line-height: 15px; }
          .file svg { margin-top: 7px; }
          .actions { grid-column: 1 / -1; display: flex; justify-content: flex-end; gap: 14px; margin-top: 22px; }
          .option { grid-column: 2; margin-top: 15px; }
        </style>
        <header>
          <span>${this.getAttribute('heading')}</span>
          <button class="close" aria-label="Close">${icon('close', 11)}</button>
        </header>
        <div class="content">
          ${icon('warning', 38)}
          <div>
            <slot name="message"></slot>
            <div class="file">
              ${icon('dll', 84, 107)}
              <div><slot name="details"></slot></div>
            </div>
          </div>
          <div class="actions"><slot name="actions"></slot></div>
          <div class="option"><slot name="option"></slot></div>
        </div>
      `;
    }
  }

  class PushButton extends BaseElement {
    render() {
      return `
        <style>
          :host { display: block; }
          button {
            display: block;
            width: 87px;
            height: 24px;
            border: 1px solid #707070;
            border-radius: 3px;
            background: linear-gradient(#f2f2f2, #ebebeb 48%, #dadada 52%, #cfcfcf);
            box-shadow: inset 0 0 0 1px #fbfbfb;
          }
          :host([kind="default"]) button {
            border-color: #3c7fb1;
            background: linear-gradient(#eef3f6, #e2ecf2 48%, #cfdfe8 52%, #c4d8e4);
            box-shadow: inset 0 0 0 1px #7cd4f4;
          }
          :host([kind="hot"]) button {
            border-color: #3c7fb1;
            background: linear-gradient(#eaf6fd, #d9f0fc 48%, #bee6fd 52%, #a7d9f5);
          }
        </style>
        <button><slot></slot></button>
      `;
    }
  }

  class CheckOption extends BaseElement {
    render() {
      return `
        <style>
          :host { display: block; }
          label { display: flex; align-items: center; gap: 3px; margin-left: -2px; }
          input {
            appearance: none;
            flex: none;
            width: 13px;
            height: 13px;
            border: 1px solid #7c8288;
            background: linear-gradient(135deg, #cfd4da, #fafafa);
            box-shadow: inset 0 0 0 1px #f4f4f4;
          }
          input:checked {
            background: url('data:image/svg+xml,<svg xmlns="http://www.w3.org/2000/svg" viewBox="0 0 11 11"><path d="M2.500 5l2.500 3.500L8.500 1.500" fill="none" stroke="%23404c88" stroke-width="1.800"/></svg>'), linear-gradient(135deg, #cfd4da, #fafafa);
          }
        </style>
        <label><input type="checkbox" checked><span><slot></slot></span></label>
      `;
    }
  }

  class TaskBar extends BaseElement {
    render() {
      return `
        <style>
          :host {
            display: flex;
            position: relative;
            height: 40px;
            border-top: 1px solid #2c4866;
            background: linear-gradient(90deg, #8e9cb4, #a6b8d2 12%, #a9bfdc 25%, #a9c1de 81%, #7d8da2 86%, #7a8a9e);
            box-shadow: inset 0 1px 0 #c8d6e6;
          }
          .start { width: 54px; padding-left: 8px; }
          .tasks { display: flex; flex: 1; gap: 2px; padding-left: 5px; }
          .tray { display: flex; align-items: center; gap: 8px; color: #fff; }
          .up { margin-right: 5px; }
          .clock { width: 70px; text-align: center; line-height: 17px; }
          ::slotted(time) { display: block; }
          .peek { width: 14px; border: 1px solid #4c5a6c; border-right: 0; background: linear-gradient(#6c7a8c, #4e5c70 40%, #8c9cb0); box-shadow: inset 1px 0 0 #a4b2c2; }
        </style>
        <button class="start" aria-label="Start">${icon('orb', 38)}</button>
        <div class="tasks"><slot></slot></div>
        <div class="tray">
          ${icon('up', 8, 5)}
          ${icon('lan', 16)}
          ${icon('muted', 17, 16)}
          <div class="clock"><slot name="clock"></slot></div>
        </div>
        <button class="peek" aria-label="Show desktop"></button>
      `;
    }
  }

  class TaskButton extends BaseElement {
    render() {
      return `
        <style>
          :host { display: block; }
          button { display: grid; place-items: center; width: 60px; height: 39px; border: 1px solid transparent; border-radius: 3px; }
          :host([active]) button {
            border-color: #3c4c60;
            background: linear-gradient(120deg, #f4f7fb, #dbe3ed 60%, #e6ecf4);
            box-shadow: inset 0 0 0 1px #fff;
          }
        </style>
        <button aria-label="${this.getAttribute('label')}">${icon(this.getAttribute('icon'), 32)}</button>
      `;
    }
  }

  class MousePointer extends BaseElement {
    render() {
      return `
        <style>
          :host { display: block; filter: drop-shadow(1px 2px 1px rgba(0, 0, 0, .4)); }
        </style>
        <svg width="13" height="20" viewBox="0 0 13 20" aria-hidden="true">
          <path d="M1 1.500v15l3.500-3.200 2.300 5.400 2.600-1.100-2.300-5.300H12z" fill="#fff" stroke="#000"/>
        </svg>
      `;
    }
  }

  window.customElements.define('win-desktop', WinDesktop);
  window.customElements.define('desktop-icon', DesktopIcon);
  window.customElements.define('explorer-window', ExplorerWindow);
  window.customElements.define('address-bar', AddressBar);
  window.customElements.define('address-crumb', AddressCrumb);
  window.customElements.define('search-box', SearchBox);
  window.customElements.define('tool-button', ToolButton);
  window.customElements.define('nav-group', NavGroup);
  window.customElements.define('nav-item', NavItem);
  window.customElements.define('file-list', FileList);
  window.customElements.define('access-dialog', AccessDialog);
  window.customElements.define('push-button', PushButton);
  window.customElements.define('check-option', CheckOption);
  window.customElements.define('task-bar', TaskBar);
  window.customElements.define('task-button', TaskButton);
  window.customElements.define('mouse-pointer', MousePointer);
})();
</script>
</body>
</html>
